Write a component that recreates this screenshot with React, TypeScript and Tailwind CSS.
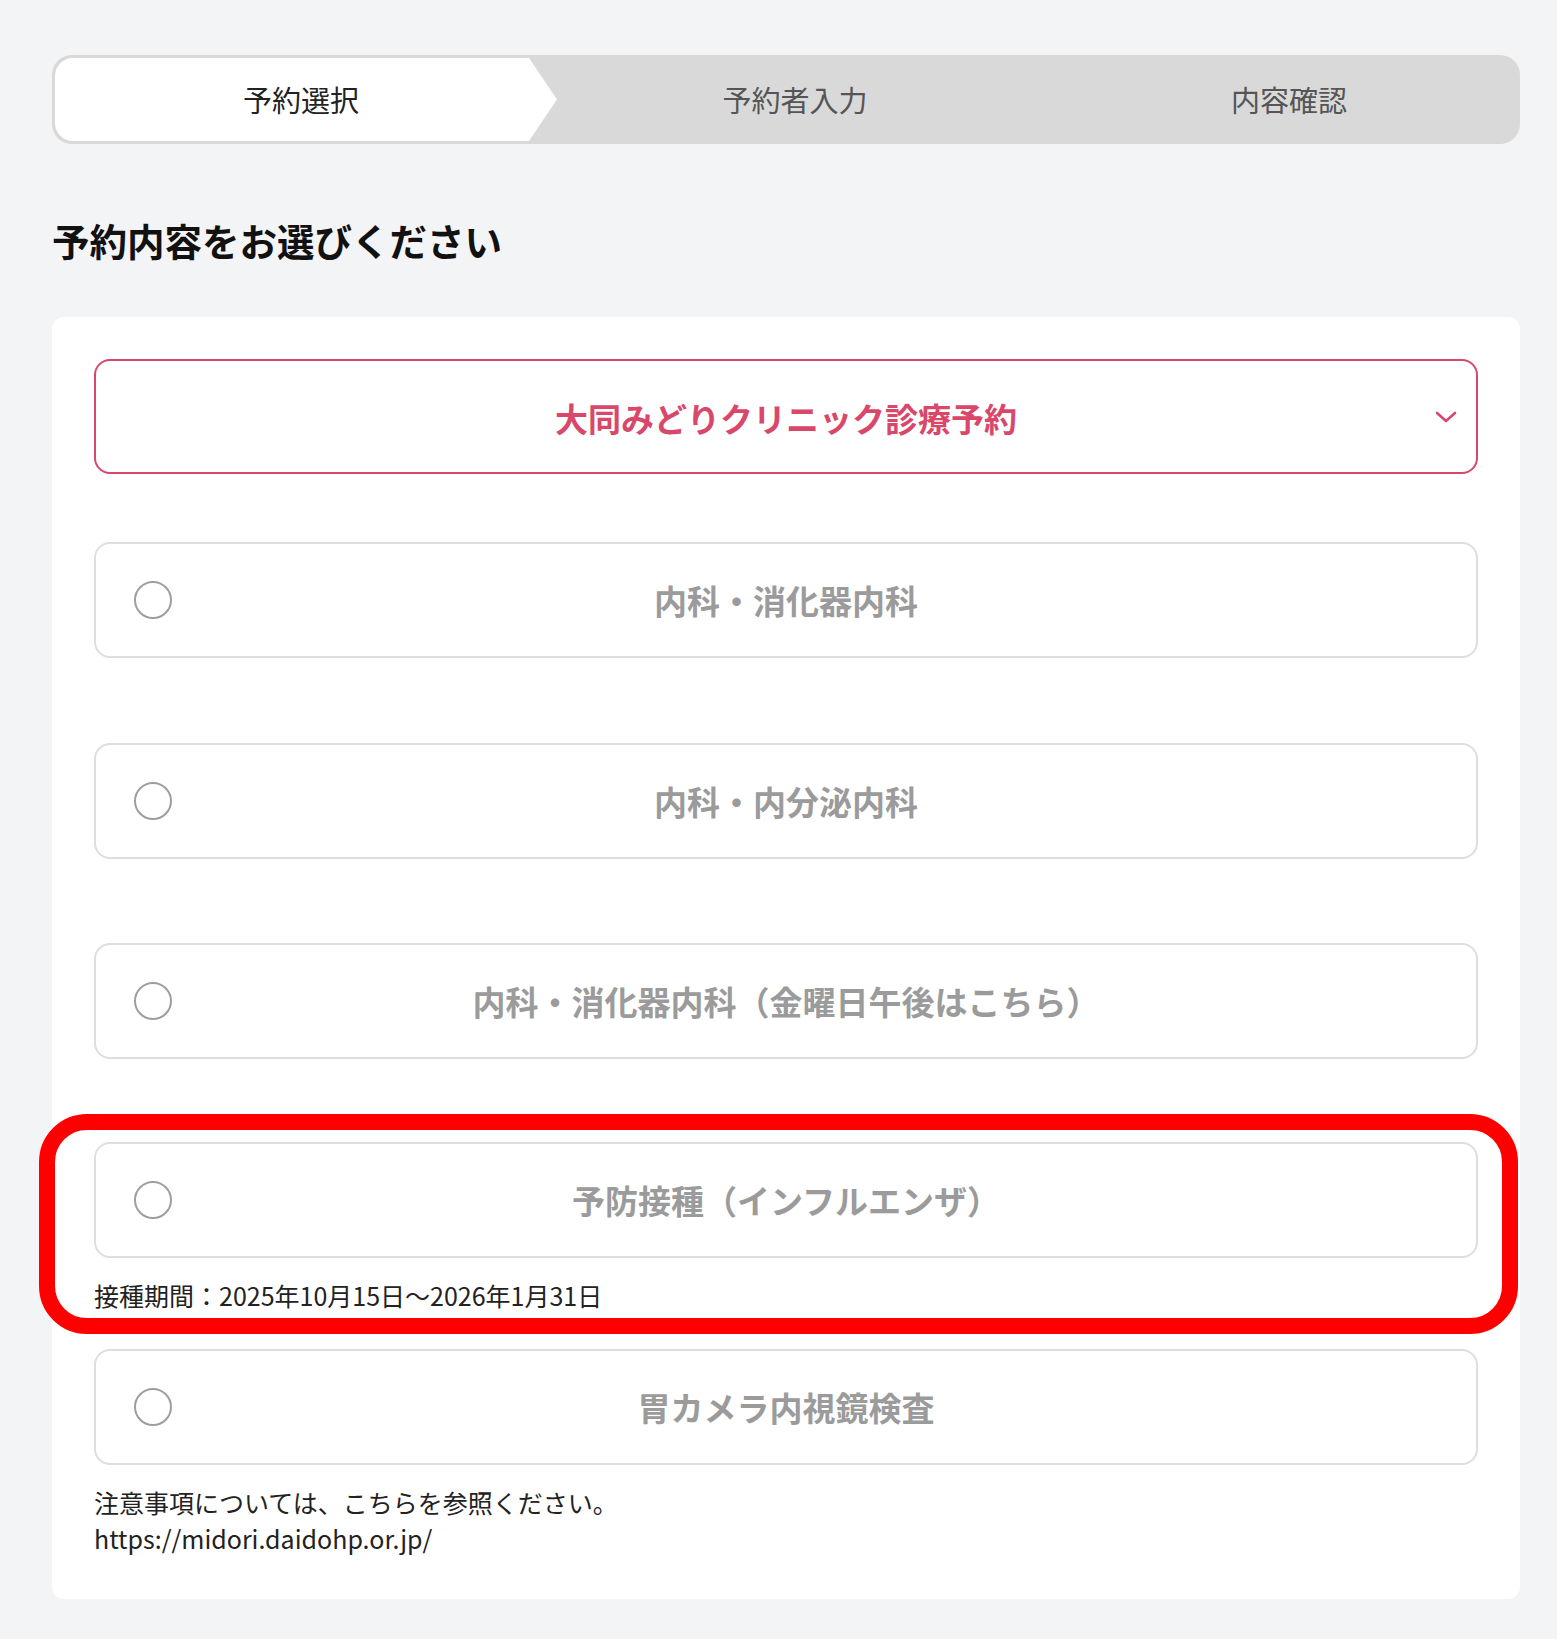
import React from "react";

const FONT = { fontFamily: '"Noto Sans CJK JP", "Noto Sans", sans-serif' };

function Radio() {
  return <span className="absolute left-[38px] top-1/2 -translate-y-1/2 w-[38px] h-[38px] rounded-full border-2 border-[#9e9e9e] bg-white" />;
}

function Option({ label }: { label: string }) {
  return (
    <div className="relative h-[116px] rounded-[16px] border-2 border-[#dedede] bg-white flex items-center justify-center">
      <Radio />
      <span className="text-[33px] font-bold text-[#9b9b9b] leading-none">{label}</span>
    </div>
  );
}

export default function App() {
  return (
    <div className="min-h-[1639px] bg-[#f3f4f6] pl-[52px] pr-[37px] pt-[55px] pb-[40px]" style={FONT}>
      {/* Stepper */}
      <div className="h-[89px] rounded-[20px] bg-[#d9d9d9] p-[3px] flex">
        <div className="w-[502px] h-full bg-white rounded-l-[18px] flex items-center justify-center pr-[10px] text-[29px] text-[#222] [clip-path:polygon(0_0,calc(100%-28px)_0,100%_50%,calc(100%-28px)_100%,0_100%)]">
          予約選択
        </div>
        <div className="w-[476px] h-full flex items-center justify-center text-[29px] text-[#555]">予約者入力</div>
        <div className="flex-1 h-full flex items-center justify-center pl-[28px] text-[29px] text-[#555]">内容確認</div>
      </div>

      <h1 className="mt-[69px] mb-[50px] text-[37.5px] leading-[54px] font-bold text-[#111]">予約内容をお選びください</h1>

      <div className="bg-white rounded-[12px] px-[42px] pt-[42px] pb-[43px]">
        <div className="relative h-[115px] rounded-[16px] border-2 border-[#d9486b] flex items-center justify-center">
          <span className="mt-[3px] text-[33px] font-bold text-[#d9486b] leading-none">大同みどりクリニック診療予約</span>
          <svg className="absolute right-[19px] top-1/2 -translate-y-1/2" width="22" height="14" viewBox="0 0 22 14" fill="none">
            <path d="M2 3l9 8 9-8" stroke="#d9486b" strokeWidth="2.6" strokeLinecap="round" strokeLinejoin="round" />
          </svg>
        </div>

        <div className="mt-[68px]">
          <Option label="内科・消化器内科" />
        </div>
        <div className="mt-[85px]">
          <Option label="内科・内分泌内科" />
        </div>
        <div className="mt-[84px]">
          <Option label="内科・消化器内科（金曜日午後はこちら）" />
        </div>
        <div className="relative mt-[83px]">
          <Option label="予防接種（インフルエンザ）" />
          <p className="mt-[19px] text-[25px] leading-[36px] text-[#222]">接種期間：2025年10月15日〜2026年1月31日</p>
          <div className="pointer-events-none absolute left-[-55px] right-[-40px] top-[-28px] bottom-[-21px] rounded-[48px] border-[16px] border-[#ff0000]" />
        </div>
        <div className="mt-[36px]">
          <Option label="胃カメラ内視鏡検査" />
        </div>
        <div className="mt-[19px] text-[25px] leading-[36px] text-[#222]">
          <p>注意事項については、こちらを参照ください。</p>
          <p>https://midori.daidohp.or.jp/</p>
        </div>
      </div>
    </div>
  );
}
